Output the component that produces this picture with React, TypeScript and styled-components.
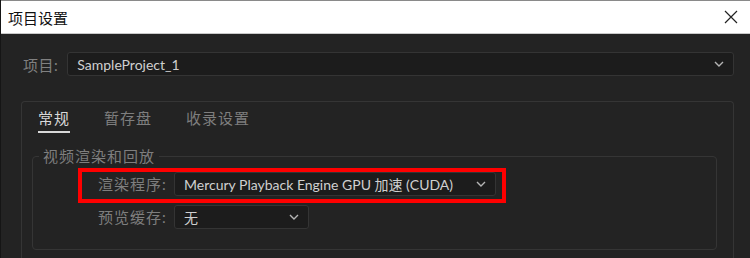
import styled, { createGlobalStyle } from 'styled-components';

const GlobalStyle = createGlobalStyle`
  html, body {
    margin: 0;
    padding: 0;
    background: #232323;
  }
  #root {
    width: 750px;
    height: 258px;
    overflow: hidden;
  }
`;

const FONT = `Lato, "Noto Sans CJK SC", sans-serif`;

function Chevron() {
  return (
    <svg width="10" height="6" viewBox="0 0 10 6">
      <path d="M1 1 L5 5 L9 1" fill="none" stroke="#b5b5b5" strokeWidth="1.4" />
    </svg>
  );
}

interface SelectProps {
  value: string;
  width: number;
}

function Select({ value, width }: SelectProps) {
  return (
    <SelectBox style={{ width }}>
      <SelectText>{value}</SelectText>
      <Chevron />
    </SelectBox>
  );
}

function App() {
  const tabs = ['常规', '暂存盘', '收录设置'];

  return (
    <Window>
      <GlobalStyle />
      <TitleBar>
        <Title>项目设置</Title>
        <CloseButton>
          <svg width="14" height="14" viewBox="0 0 14 14">
            <path d="M1 1 L13 13 M13 1 L1 13" stroke="#222" strokeWidth="1.2" />
          </svg>
        </CloseButton>
      </TitleBar>
      <Body>
        <ProjectRow>
          <ProjectLabel>项目:</ProjectLabel>
          <ProjectSelect>
            <SelectText>SampleProject_1</SelectText>
            <Chevron />
          </ProjectSelect>
        </ProjectRow>
        <Panel>
          <TabBar>
            {tabs.map((t, i) => (
              <Tab key={t} active={i === 0}>
                {t}
              </Tab>
            ))}
          </TabBar>
          <Group>
            <Legend>视频渲染和回放</Legend>
            <FormRow highlighted>
              <FieldLabel>渲染程序:</FieldLabel>
              <Select value="Mercury Playback Engine GPU 加速 (CUDA)" width={322} />
            </FormRow>
            <FormRow>
              <FieldLabel>预览缓存:</FieldLabel>
              <Select value="无" width={135} />
            </FormRow>
          </Group>
        </Panel>
      </Body>
    </Window>
  );
}
export default App;

const Window = styled.div`
  width: 750px;
  height: 258px;
  display: flex;
  flex-direction: column;
  background: #232323;
  font-family: ${FONT};
  box-sizing: border-box;
  border-left: 1px solid #151515;
`;
const TitleBar = styled.div`
  height: 34px;
  flex-shrink: 0;
  display: flex;
  align-items: center;
  justify-content: space-between;
  background: #ffffff;
  border-top: 1px solid #8a8a8a;
  border-bottom: 1px solid #c9c9c9;
  box-sizing: border-box;
  padding: 0 12px 0 7px;
`;
const Title = styled.div`
  font-family: "Noto Sans CJK SC", sans-serif;
  font-size: 15px;
  color: #111;
`;
const CloseButton = styled.div`
  display: flex;
  align-items: center;
`;
const Body = styled.div`
  flex: 1;
  display: flex;
  flex-direction: column;
  padding: 18px 16px 0 20px;
  min-height: 0;
`;
const ProjectRow = styled.div`
  display: flex;
  align-items: center;
  gap: 9px;
`;
const ProjectLabel = styled.div`
  font-size: 15px;
  letter-spacing: 0.5px;
  color: #808080;
  padding-left: 2px;
`;
const SelectBox = styled.div`
  height: 24px;
  box-sizing: border-box;
  display: flex;
  align-items: center;
  justify-content: space-between;
  padding: 0 9px 0 9px;
  background: #1c1c1c;
  border: 1px solid #343434;
  border-radius: 3px;
`;
const ProjectSelect = styled(SelectBox)`
  flex: 1;
  height: 24px;
`;
const SelectText = styled.span`
  font-size: 14px;
  letter-spacing: 0;
  color: #d0d0d0;
  white-space: nowrap;
`;
const Panel = styled.div`
  margin-top: 25px;
  flex: 1;
  border: 1px solid #353535;
  border-bottom: none;
  border-radius: 4px 4px 0 0;
  padding: 0 16px 0 10px;
`;
const TabBar = styled.div`
  display: flex;
  gap: 34px;
  padding: 6px 0 0 6px;
`;
const Tab = styled.div<{ active?: boolean }>`
  font-size: 15px;
  line-height: 20px;
  letter-spacing: 1px;
  padding: 0 0 3px 0;
  color: ${(p) => (p.active ? '#d8d8d8' : '#7e7e7e')};
  border-bottom: 2px solid ${(p) => (p.active ? '#d8d8d8' : 'transparent')};
`;
const Group = styled.fieldset`
  margin: 13px 0 0 0;
  padding: 0 0 13px 0;
  border: 1px solid #353535;
  border-radius: 4px;
  min-width: 0;
`;
const Legend = styled.legend`
  font-size: 15px;
  line-height: 20px;
  letter-spacing: 1px;
  color: #7e7e7e;
  padding: 0 4px;
  margin-left: 6px;
`;
const FormRow = styled.div<{ highlighted?: boolean }>`
  display: flex;
  align-items: flex-start;
  gap: 8px;
  width: fit-content;
  padding: 0 6px 3px 16px;
  margin-left: 45px;
  border: 4px solid ${(p) => (p.highlighted ? '#ff0000' : 'transparent')};
  margin-top: ${(p) => (p.highlighted ? '2px' : '-2px')};
`;
const FieldLabel = styled.div`
  width: 68px;
  text-align: right;
  font-size: 15px;
  line-height: 24px;
  letter-spacing: 1px;
  color: #7e7e7e;
  white-space: nowrap;
`;
